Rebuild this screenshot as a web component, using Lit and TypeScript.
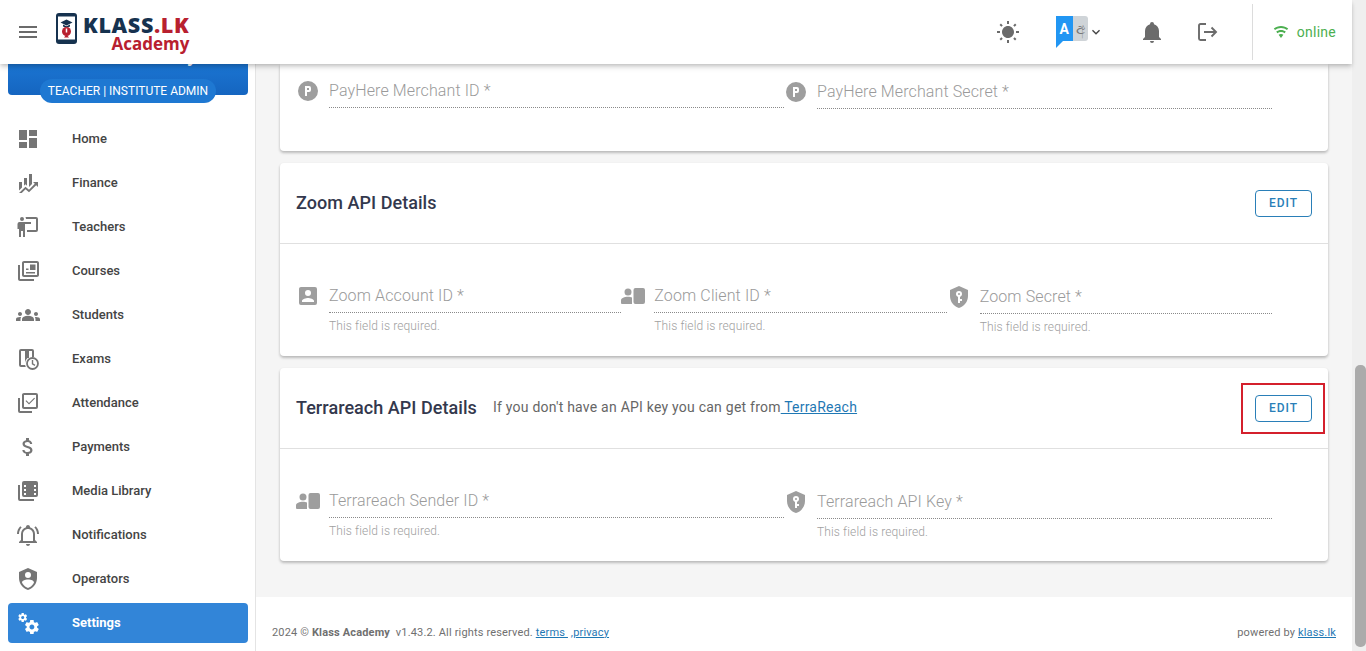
import { LitElement, html, css } from "lit";
import { customElement } from "lit/decorators.js";

const P = {
  menu: "M3 18h18v-2H3v2zm0-5h18v-2H3v2zm0-7v2h18V6H3z",
  home: "M3 13h8V3H3v10zm0 8h8v-6H3v6zm10 0h8V11h-8v10zm0-18v6h8V3h-8z",
  finance: "M6,16.5L3,19.44V11H6M11,14.66L9.43,13.32L8,14.64V7H11M16,13L13,16V3H16M18.81,12.81L17,11H22V16L20.21,14.21L13,21.36L9.53,18.34L5.75,22H3L9.47,15.66L13,18.64",
  teachers: "M20,17A2,2 0 0,0 22,15V4A2,2 0 0,0 20,2H9.46C9.81,2.61 10,3.3 10,4H20V15H11V17M15,7V9H9V22H7V16H5V22H3V14H1.5V9A2,2 0 0,1 3.5,7H15M8,4A2,2 0 0,1 6,6A2,2 0 0,1 4,4A2,2 0 0,1 6,2A2,2 0 0,1 8,4Z",
  courses: "M4 6H2v14c0 1.1.9 2 2 2h14v-2H4V6zM21 2H8c-1.1 0-2 .9-2 2v12c0 1.1.9 2 2 2h13c1.1 0 2-.9 2-2V4c0-1.1-.9-2-2-2zm0 14H8V4h13v12zM10 13h9v1.6h-9zM14 5.5h5.5V11H14zM10 9.5h2.5v1.5H10z",
  students: "M12 12.75c1.63 0 3.07.39 4.24.9 1.08.48 1.76 1.56 1.76 2.73V18H6v-1.61c0-1.18.68-2.26 1.76-2.73 1.17-.52 2.61-.91 4.24-.91zM4 13c1.1 0 2-.9 2-2s-.9-2-2-2-2 .9-2 2 .9 2 2 2zm1.13 1.1c-.37-.06-.74-.1-1.13-.1-.99 0-1.93.21-2.78.58C.48 14.9 0 15.62 0 16.43V18h4.5v-1.61c0-.83.23-1.61.63-2.29zM20 13c1.1 0 2-.9 2-2s-.9-2-2-2-2 .9-2 2 .9 2 2 2zm4 3.43c0-.81-.48-1.53-1.22-1.85-.85-.37-1.79-.58-2.78-.58-.39 0-.76.04-1.13.1.4.68.63 1.46.63 2.29V18H24v-1.57zM12 6c1.66 0 3 1.34 3 3s-1.34 3-3 3-3-1.34-3-3 1.34-3 3-3z",
  attendance: "M20,16V4H8V16H20M22,16A2,2 0 0,1 20,18H8C6.89,18 6,17.1 6,16V4C6,2.89 6.89,2 8,2H20A2,2 0 0,1 22,4V16M16,20V22H4A2,2 0 0,1 2,20V7H4V20H16M13,13.5L9.5,10L10.3,9.2L13,11.9L18.2,6.7L19,7.5L13,13.5Z",
  payments: "M11.8 10.9c-2.27-.59-3-1.2-3-2.15 0-1.09 1.01-1.85 2.7-1.85 1.78 0 2.44.85 2.5 2.1h2.21c-.07-1.72-1.12-3.3-3.21-3.81V3h-3v2.16c-1.94.42-3.5 1.68-3.5 3.61 0 2.31 1.91 3.46 4.7 4.13 2.5.6 3 1.48 3 2.41 0 .69-.49 1.79-2.7 1.79-2.06 0-2.87-.92-2.98-2.1h-2.2c.12 2.19 1.76 3.42 3.68 3.83V21h3v-2.15c1.95-.37 3.5-1.5 3.5-3.55 0-2.84-2.43-3.81-4.7-4.4z",
  media: "M4 6H2V20A2 2 0 0 0 4 22H18V20H4V6M20 2H8A2 2 0 0 0 6 4V16A2 2 0 0 0 8 18H20A2 2 0 0 0 22 16V4A2 2 0 0 0 20 2M10 16H8V14H10V16M10 12H8V10H10V12M10 8H8V6H10V8M20 16H18V14H20V16M20 12H18V10H20V12M20 8H18V6H20V8Z",
  notifications: "M10 21H14C14 22.1 13.1 23 12 23S10 22.1 10 21M21 19V20H3V19L5 17V11C5 7.9 7 5.2 10 4.3V4C10 2.9 10.9 2 12 2S14 2.9 14 4V4.3C17 5.2 19 7.9 19 11V17L21 19M17 11C17 8.2 14.8 6 12 6S7 8.2 7 11V18H17V11M19.75 3.19L18.33 4.61C20.04 6.3 21 8.6 21 11H23C23 8.07 21.84 5.25 19.75 3.19M1 11H3C3 8.6 3.96 6.3 5.67 4.61L4.25 3.19C2.16 5.25 1 8.07 1 11Z",
  operators: "M12,1L3,5V11C3,16.55 6.84,21.74 12,23C17.16,21.74 21,16.55 21,11V5L12,1M12,5A3,3 0 0,1 15,8A3,3 0 0,1 12,11A3,3 0 0,1 9,8A3,3 0 0,1 12,5M17.13,17C15.92,18.85 14.11,20.24 12,20.92C9.89,20.24 8.08,18.85 6.87,17C6.53,16.5 6.24,16 6,15.47C6,13.82 8.71,12.47 12,12.47C15.29,12.47 18,13.8 18,15.47C17.76,16 17.47,16.5 17.13,17Z",
  settings: "M15.9,18.45C17.25,18.45 18.35,17.35 18.35,16C18.35,14.65 17.25,13.55 15.9,13.55C14.54,13.55 13.45,14.65 13.45,16C13.45,17.35 14.54,18.45 15.9,18.45M21.1,16.68L22.58,17.84C22.71,17.95 22.75,18.13 22.66,18.29L21.26,20.71C21.17,20.86 21,20.92 20.83,20.86L19.09,20.16C18.73,20.44 18.34,20.67 17.91,20.85L17.64,22.7C17.61,22.87 17.47,23 17.3,23H14.5C14.32,23 14.18,22.87 14.15,22.7L13.89,20.85C13.45,20.67 13.07,20.44 12.71,20.16L10.96,20.86C10.81,20.92 10.62,20.86 10.54,20.71L9.14,18.29C9.05,18.13 9.09,17.95 9.22,17.84L10.7,16.68L10.65,16L10.7,15.31L9.22,14.16C9.09,14.05 9.05,13.86 9.14,13.71L10.54,11.29C10.62,11.13 10.81,11.07 10.96,11.13L12.71,11.84C13.07,11.56 13.45,11.32 13.89,11.15L14.15,9.29C14.18,9.13 14.32,9 14.5,9H17.3C17.47,9 17.61,9.13 17.64,9.29L17.91,11.15C18.34,11.32 18.73,11.56 19.09,11.84L20.83,11.13C21,11.07 21.17,11.13 21.26,11.29L22.66,13.71C22.75,13.86 22.71,14.05 22.58,14.16L21.1,15.31L21.15,16L21.1,16.68M6.69,8.07C7.56,8.07 8.26,7.37 8.26,6.5C8.26,5.63 7.56,4.92 6.69,4.92A1.58,1.58 0 0,0 5.11,6.5C5.11,7.37 5.82,8.07 6.69,8.07M10.03,6.94L11,7.68C11.07,7.75 11.09,7.87 11.03,7.97L10.13,9.53C10.08,9.63 9.96,9.67 9.86,9.63L8.74,9.18L8,9.62L7.81,10.81C7.79,10.92 7.7,11 7.59,11H5.79C5.67,11 5.58,10.92 5.56,10.81L5.4,9.62L4.64,9.18L3.5,9.63C3.41,9.67 3.3,9.63 3.24,9.53L2.34,7.97C2.28,7.87 2.31,7.75 2.39,7.68L3.34,6.94L3.31,6.5L3.34,6.06L2.39,5.32C2.31,5.25 2.28,5.13 2.34,5.03L3.24,3.47C3.3,3.37 3.41,3.33 3.5,3.37L4.63,3.82L5.4,3.38L5.56,2.19C5.58,2.08 5.67,2 5.79,2H7.59C7.7,2 7.79,2.08 7.81,2.19L8,3.38L8.74,3.82L9.86,3.37C9.96,3.33 10.08,3.37 10.13,3.47L11.03,5.03C11.09,5.13 11.07,5.25 11,5.32L10.03,6.06L10.06,6.5L10.03,6.94Z",
  pCircle: "M9,7V17H11V13H13A2,2 0 0,0 15,11V9A2,2 0 0,0 13,7H9M11,9H13V11H11V9M12,2A10,10 0 0,1 22,12A10,10 0 0,1 12,22A10,10 0 0,1 2,12A10,10 0 0,1 12,2Z",
  accountBox: "M6,17C6,15 10,14 12,14C14,14 18,15 18,17V18H6V17M15,9A3,3 0 0,1 12,12A3,3 0 0,1 9,9A3,3 0 0,1 12,6A3,3 0 0,1 15,9M3,5V19A2,2 0 0,0 5,21H19A2,2 0 0,0 21,19V5A2,2 0 0,0 19,3H5C3.89,3 3,3.9 3,5Z",
  personCard: "M7 4.5a3.5 3.5 0 1 1 0 7 3.5 3.5 0 0 1 0-7zM0 19v-2.5C0 14 3.5 12.8 7 12.8c1.5 0 3 .2 4 .7V20H1a1 1 0 0 1-1-1zM14.5 4H22a2 2 0 0 1 2 2v12a2 2 0 0 1-2 2h-7.5a2 2 0 0 1-2-2V6a2 2 0 0 1 2-2z",
  shieldKey: "M12,8A1,1 0 0,1 13,9A1,1 0 0,1 12,10A1,1 0 0,1 11,9A1,1 0 0,1 12,8M21,11C21,16.55 17.16,21.74 12,23C6.84,21.74 3,16.55 3,11V5L12,1L21,5V11M12,6A3,3 0 0,0 9,9C9,10.31 9.83,11.42 11,11.83V18H13V16H15V14H13V11.83C14.17,11.42 15,10.31 15,9A3,3 0 0,0 12,6Z",
  sun: "M3.55 19.09L4.96 20.5L6.76 18.71L5.34 17.29M12 6C8.69 6 6 8.69 6 12S8.69 18 12 18 18 15.31 18 12C18 8.68 15.31 6 12 6M20 13H23V11H20M17.24 18.71L19.04 20.5L20.45 19.09L18.66 17.29M20.45 5L19.04 3.6L17.24 5.39L18.66 6.81M13 1H11V4H13M6.76 5.39L4.96 3.6L3.55 5L5.34 6.81L6.76 5.39M1 13H4V11H1M13 20H11V23H13",
  bell: "M21,19V20H3V19L5,17V11C5,7.9 7.03,5.17 10,4.29C10,4.19 10,4.1 10,4A2,2 0 0,1 12,2A2,2 0 0,1 14,4C14,4.1 14,4.19 14,4.29C16.97,5.17 19,7.9 19,11V17L21,19M14,21A2,2 0 0,1 12,23A2,2 0 0,1 10,21",
  wifi: "M12,21L15.6,16.2C14.6,15.45 13.35,15 12,15C10.65,15 9.4,15.45 8.4,16.2L12,21M12,3C7.95,3 4.21,4.34 1.2,6.6L3,9C5.5,7.12 8.62,6 12,6C15.38,6 18.5,7.12 21,9L22.8,6.6C19.79,4.34 16.05,3 12,3M12,9C9.3,9 6.81,9.89 4.8,11.4L6.6,13.8C8.1,12.67 9.97,12 12,12C14.03,12 15.9,12.67 17.4,13.8L19.2,11.4C17.19,9.89 14.7,9 12,9Z",
  chevron: "M7.41 8.59L12 13.17l4.59-4.58L18 10l-6 6-6-6z",
};

const ico = (d: string) => html`<svg class="ico" viewBox="0 0 24 24"><path d=${d} fill-rule="evenodd"></path></svg>`;

const examsIcon = html`<svg class="ico" viewBox="0 0 24 24">
  <path d="M5 2h11a2 2 0 0 1 2 2v6h-2V4h-3v7h-1.5c-1.5 1.5-2.5 3.5-2.5 5.5 0 1.2.3 2.4.8 3.5H5a2 2 0 0 1-2-2V4a2 2 0 0 1 2-2zm0 2v14h4.2c-.1-.5-.2-1-.2-1.5V4z" fill-rule="evenodd"></path>
  <circle cx="16.5" cy="16.5" r="5.5" fill="none" stroke="currentColor" stroke-width="1.8"></circle>
  <path d="M16.5 13v3.8l2.5 1.5" fill="none" stroke="currentColor" stroke-width="1.4"></path>
</svg>`;

const logoutIcon = html`<svg class="ico" viewBox="0 0 24 24">
  <path d="M11 4H5.5A1.5 1.5 0 0 0 4 5.5v13A1.5 1.5 0 0 0 5.5 20H11" fill="none" stroke="currentColor" stroke-width="1.9"></path>
  <path d="M9 12h12M16.5 7.5L21 12l-4.5 4.5" fill="none" stroke="currentColor" stroke-width="1.9"></path>
</svg>`;

const MENU: [string, unknown][] = [
  ["Home", ico(P.home)],
  ["Finance", ico(P.finance)],
  ["Teachers", ico(P.teachers)],
  ["Courses", ico(P.courses)],
  ["Students", ico(P.students)],
  ["Exams", examsIcon],
  ["Attendance", ico(P.attendance)],
  ["Payments", ico(P.payments)],
  ["Media Library", ico(P.media)],
  ["Notifications", ico(P.notifications)],
  ["Operators", ico(P.operators)],
];

const field = (d: string, label: string, help: boolean, low = false) => html`
  <div class="field ${low ? "low" : ""}">
    <span class="f-ico">${ico(d)}</span>
    <div class="f-main">
      <div class="f-label">${label}</div>
      <div class="f-line"></div>
      ${help ? html`<div class="f-help">This field is required.</div>` : ""}
    </div>
  </div>`;

@customElement("app-root")
export class AppRoot extends LitElement {
  static styles = css`
    :host { display: flex; width: 1366px; height: 651px; overflow: hidden; font-family: Roboto, "Liberation Sans", sans-serif; background: #f5f5f5; color: #333; }
    * { box-sizing: border-box; }
    .ico { width: 24px; height: 24px; display: block; fill: currentColor; flex: none; }
    .shell { width: 1352px; display: flex; flex-direction: column; height: 651px; }

    header { height: 64px; flex: none; background: #fff; display: flex; align-items: center; position: relative; z-index: 2; box-shadow: 0 2px 4px -1px rgba(0,0,0,.2), 0 4px 5px 0 rgba(0,0,0,.1); color: #6b6b6b; padding-left: 16px; }
    .logo { display: flex; align-items: flex-start; margin-left: 16px; width: 136px; height: 40px; gap: 6px; padding-top: 1px; }
    .logo svg { flex: none; }
    .logo-text { display: flex; flex-direction: column; align-items: flex-end; font-family: "Open Sans", sans-serif; font-weight: 800; margin-top: 2px; }
    .lk1 { font-size: 21.5px; line-height: 20px; color: #16324f; letter-spacing: .65px; }
    .lk1 span { color: #b8202f; }
    .lk2 { font-size: 17px; line-height: 18px; color: #b8202f; font-weight: 700; }
    .h-right { margin-left: auto; display: flex; align-items: center; height: 64px; }
    .h-sun { margin-right: 36px; }
    .lang { display: flex; align-items: center; width: 56px; margin-right: 28px; }
    .lang-flag { width: 32px; height: 32px; position: relative; display: flex; align-items: flex-start; }
    .lang-a { width: 17px; height: 25px; background: #2196f3; color: #fff; font: 700 14px/26px Roboto, sans-serif; text-align: center; }
    .lang-b { width: 15px; height: 25px; background: #cfd4d8; color: #777; font: 400 15px/24px "Noto Sans", "DejaVu Sans", serif; text-align: center; border-radius: 0 3px 3px 0; overflow: hidden; }
    .lang-tail { position: absolute; left: 0; top: 25px; width: 0; height: 0; border-top: 7px solid #2196f3; border-right: 7px solid transparent; }
    .lang .ico { width: 16px; height: 16px; margin-left: 0; color: #444; }
    .h-bell { margin-right: 31px; }
    .h-out { margin-right: 33px; }
    .h-div { width: 1px; height: 56px; background: #dcdcdc; margin-right: 20px; }
    .online { display: flex; align-items: center; gap: 8px; color: #4caf50; font-size: 14px; padding-right: 16px; letter-spacing: .25px; }
    .online .ico { width: 16px; height: 16px; }

    .below { flex: 1; display: flex; min-height: 0; }
    aside { width: 256px; flex: none; background: #fff; border-right: 1px solid #e4e4e4; overflow: hidden; padding: 0 7px 0 8px; }
    .profile { height: 31px; width: 240px; background: linear-gradient(#1b75d2, #1565c0); border-radius: 0 0 4px 4px; position: relative; margin-bottom: 24px; }
    .p-name { position: absolute; left: 0; right: 0; bottom: 28px; text-align: center; color: #fff; font-size: 20px; line-height: 24px; font-weight: 500; }
    .p-badge { position: absolute; left: 32px; top: 15px; width: 176px; height: 24px; border-radius: 12px; background: #1e78d2; color: #fff; font-size: 12px; line-height: 24px; text-align: center; font-weight: 400; }
    .item { height: 40px; width: 240px; margin-bottom: 4px; border-radius: 4px; display: flex; align-items: center; gap: 32px; padding-left: 8px; font-size: 13px; font-weight: 500; color: #444; }
    .item span { margin-top: -2px; }
    .item .ico { color: #757575; }
    .item.active { background: #3285d8; color: #fff; font-weight: 700; }
    .item.active .ico { color: #fff; }

    main { flex: 1; min-width: 0; display: flex; flex-direction: column; }
    .scroll { flex: 1; min-height: 0; padding: 0 24px 36px; display: flex; flex-direction: column; justify-content: flex-end; gap: 12px; overflow: hidden; }
    .card { background: #fff; border-radius: 4px; box-shadow: 0 2px 3px rgba(0,0,0,.2), 0 1px 3px rgba(0,0,0,.08); flex: none; }
    .card.top { height: 87px; border-radius: 0 0 4px 4px; padding-top: 14px; }
    .head { height: 81px; border-bottom: 1px solid #e0e0e0; display: flex; align-items: center; padding: 0 16px; }
    h2 { margin: 0 0 2px; font-size: 18px; font-weight: 500; color: #33384d; letter-spacing: .05px; }
    .sub { margin: 0 0 2px 16px; font-size: 14px; color: #666; letter-spacing: .23px; white-space: pre; }
    .sub a { color: #1f78b4; text-decoration: underline; }
    .edit-wrap { margin-left: auto; position: relative; display: flex; }
    .edit { width: 57px; height: 27px; border: 1px solid #2a7fb8; border-radius: 4px; color: #2a7fb8; font-size: 12px; font-weight: 500; letter-spacing: 1px; display: flex; align-items: center; justify-content: center; }
    .mark { position: absolute; left: -14px; right: -13px; top: -12px; bottom: -12px; border: 2px solid #d4202c; }
    .body { height: 112px; padding-top: 39px; }
    .row { display: grid; padding: 0 56px 0 16px; }
    .row.two { grid-template-columns: 1fr 1fr; }
    .row.three { grid-template-columns: 1fr 1fr 1fr; }
    .field { display: flex; min-width: 0; }
    .field.low { margin-top: 1px; }
    .f-ico { width: 33px; flex: none; color: #9e9e9e; padding-top: 1px; }
    .f-main { flex: 1; min-width: 0; }
    .f-label { height: 24px; font-size: 16px; line-height: 26px; font-weight: 300; color: #9a9a9a; letter-spacing: .12px; }
    .f-line { margin-top: 5px; border-top: 1px dotted #8a8a8a; }
    .f-help { margin-top: 6px; font-size: 12px; line-height: 14px; font-weight: 300; color: #a0a0a0; letter-spacing: .13px; }

    footer { height: 54px; flex: none; background: #fff; display: flex; align-items: center; justify-content: space-between; padding: 16px 16px 0; font-size: 11px; color: #707070; letter-spacing: .16px; white-space: pre; }
    footer a { color: #1f78b4; text-decoration: underline; }
    footer b { font-weight: 700; }

    .track { width: 14px; flex: none; background: #efefef; padding: 365px 0 4px 3px; }
    .thumb { height: 282px; background: #ababab; border-radius: 5px; }
  `;

  render() {
    return html`
      <div class="shell">
        <header>
          ${ico(P.menu)}
          <div class="logo">
            <svg width="21" height="32" viewBox="0 0 21 32">
              <rect x="0" y="0" width="21" height="31" rx="3" fill="#16324f"></rect>
              <rect x="2" y="3.5" width="17" height="23" fill="#fff"></rect>
              <path d="M10.5 6.5l6 3-6 3-6-3z" fill="#16324f"></path>
              <path d="M7 11.5v2c2 1.2 5 1.2 7 0v-2l-3.5 1.8z" fill="#16324f"></path>
              <circle cx="10.5" cy="18.5" r="4.5" fill="#b8202f"></circle>
              <path d="M10.5 15.5v4" stroke="#fff" stroke-width="1.5"></path>
              <path d="M8 24.5h5l-2.5-3z" fill="#b8202f"></path>
            </svg>
            <div class="logo-text">
              <div class="lk1">KLASS<span>.LK</span></div>
              <div class="lk2">Academy</div>
            </div>
          </div>
          <div class="h-right">
            <span class="h-sun">${ico(P.sun)}</span>
            <div class="lang">
              <div class="lang-flag">
                <div class="lang-a">A</div><div class="lang-b">අ</div>
                <div class="lang-tail"></div>
              </div>
              ${ico(P.chevron)}
            </div>
            <span class="h-bell">${ico(P.bell)}</span>
            <span class="h-out">${logoutIcon}</span>
            <div class="h-div"></div>
            <div class="online">${ico(P.wifi)}<span>online</span></div>
          </div>
        </header>
        <div class="below">
          <aside>
            <div class="profile">
              <div class="p-name">Klass Academy</div>
              <div class="p-badge">TEACHER | INSTITUTE ADMIN</div>
            </div>
            ${MENU.map(([t, i]) => html`<div class="item">${i}<span>${t}</span></div>`)}
            <div class="item active">${ico(P.settings)}<span>Settings</span></div>
          </aside>
          <main>
            <div class="scroll">
              <section class="card top">
                <div class="row two">
                  ${field(P.pCircle, "PayHere Merchant ID *", false)}
                  ${field(P.pCircle, "PayHere Merchant Secret *", false, true)}
                </div>
              </section>
              <section class="card">
                <div class="head">
                  <h2>Zoom API Details</h2>
                  <div class="edit-wrap"><div class="edit">EDIT</div></div>
                </div>
                <div class="body">
                  <div class="row three">
                    ${field(P.accountBox, "Zoom Account ID *", true)}
                    ${field(P.personCard, "Zoom Client ID *", true)}
                    ${field(P.shieldKey, "Zoom Secret *", true, true)}
                  </div>
                </div>
              </section>
              <section class="card">
                <div class="head">
                  <h2>Terrareach API Details</h2>
                  <div class="sub">If you don't have an API key you can get from<a> TerraReach</a></div>
                  <div class="edit-wrap"><div class="edit">EDIT</div><div class="mark"></div></div>
                </div>
                <div class="body">
                  <div class="row two">
                    ${field(P.personCard, "Terrareach Sender ID *", true)}
                    ${field(P.shieldKey, "Terrareach API Key *", true, true)}
                  </div>
                </div>
              </section>
            </div>
            <footer>
              <div>2024 © <b>Klass Academy</b>  v1.43.2. All rights reserved. <a>terms </a> <a>,privacy</a></div>
              <div>powered by <a>klass.lk</a></div>
            </footer>
          </main>
        </div>
      </div>
      <div class="track"><div class="thumb"></div></div>
    `;
  }
}
